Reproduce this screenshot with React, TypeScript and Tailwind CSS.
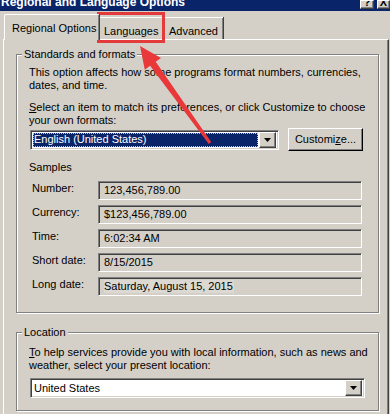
import React from "react";

const raised =
  "bg-[#d4d0c8] border-t border-l border-t-white border-l-white border-b border-r border-b-[#404040] border-r-[#404040] shadow-[inset_-1px_-1px_0_#808080]";
const sunken =
  "border-t border-l border-t-[#808080] border-l-[#808080] border-b border-r border-b-white border-r-white shadow-[inset_1px_1px_0_#404040,inset_-1px_-1px_0_#d4d0c8]";

function Cap({ children, w }: { children: React.ReactNode; w: string }) {
  return (
    <div className={`${raised} ${w} h-[9px] flex justify-center overflow-hidden`}>
      <span className="-mt-[5px] text-[11px] leading-[12px] font-bold text-black">{children}</span>
    </div>
  );
}

function DropArrow() {
  return (
    <div className={`${raised} w-[17px] h-[16px] flex items-center justify-center`}>
      <svg width="7" height="4" viewBox="0 0 7 4">
        <polygon points="0,0 7,0 3.5,4" fill="#000" />
      </svg>
    </div>
  );
}

function Row({ label, value, highlight }: { label: string; value: string; highlight?: boolean }) {
  return (
    <div className="flex items-start">
      <div className="w-[66px] ml-[3px] pt-[1px] whitespace-nowrap">{label}</div>
      <div className={`${sunken} w-[264px] h-[19px] flex items-center pl-[5px] bg-[#d4d0c8]`}>
        <span className={highlight ? "bg-[#dcd9d2] pr-[1px]" : ""}>{value}</span>
      </div>
    </div>
  );
}

export default function App() {
  return (
    <div className="relative w-[390px] h-[414px] overflow-hidden bg-[#d4d0c8] text-[11px] leading-[13px] text-black font-['Liberation_Sans',Arial,sans-serif]">
      {/* Title bar */}
      <div className="flex h-[11px] bg-[#0a246a] overflow-hidden">
        <div className="-mt-[4px] pl-[1px] text-[12px] leading-[12px] font-bold text-white whitespace-nowrap">
          Regional and Language Options
        </div>
        <div className="ml-auto flex gap-[3px] items-start">
          <Cap w="w-[14px]">?</Cap>
          <Cap w="w-[13px]">X</Cap>
        </div>
      </div>

      {/* Tabs */}
      <div className="flex items-end h-[28px] pl-[4px]">
        <div className="relative z-10 -mb-px h-[26px] w-[95px] pl-[7px] pt-[7px] bg-[#d4d0c8] border-l border-t border-white rounded-tl-[2px] shadow-[inset_-1px_0_0_#808080,1px_0_0_#404040] whitespace-nowrap">
          Regional Options
        </div>
        <div className="h-[22px] w-[64px] pl-[5px] pt-[7px] border-t border-white shadow-[inset_-1px_0_0_#808080,1px_0_0_#404040] whitespace-nowrap">
          Languages
        </div>
        <div className="h-[22px] w-[59px] ml-[1px] pl-[4px] pt-[7px] border-l border-t border-white shadow-[inset_-1px_0_0_#808080,1px_0_0_#404040] whitespace-nowrap">
          Advanced
        </div>
      </div>

      {/* Tab panel */}
      <div className="ml-[3px] w-[386px] h-[380px] border-l border-t border-white border-r border-r-[#404040] shadow-[inset_-1px_0_0_#808080] pl-[12px] pt-[8px]">
        <fieldset className="w-[363px] border border-[#808080] shadow-[inset_1px_1px_0_#fff,1px_1px_0_#fff] p-0 m-0">
          <legend className="ml-[5px] px-[2px] bg-[#d4d0c8] leading-[13px]">Standards and formats</legend>
          <div className="pl-[12px] pt-[5px] pb-[16px]">
            <div>This option affects how some programs format numbers, currencies,</div>
            <div>dates, and time.</div>
            <div className="mt-[9px]">
              <span className="underline">S</span>elect an item to match its preferences, or click Customize to choose
            </div>
            <div>your own formats:</div>
            <div className="mt-[1px] flex items-center h-[23px]">
              <div className={`${sunken} ml-[1px] w-[249px] h-[20px] bg-white flex items-center pl-[2px] pr-[2px]`}>
                <div className="flex-1 h-[14px] bg-[#0a246a] text-white flex items-center pl-[1px] outline-1 outline-dotted outline-[#c8c0a0] -outline-offset-1">
                  English (United States)
                </div>
                <div className="ml-[1px]">
                  <DropArrow />
                </div>
              </div>
              <div className={`${raised} ml-[9px] w-[75px] h-[23px] flex items-center justify-center border-b-black border-r-black`}>
                <span>
                  Customi<span className="underline">z</span>e...
                </span>
              </div>
            </div>
            <div className="mt-[10px]">Samples</div>
            <div className="mt-[7px] flex flex-col gap-[5px]">
              <Row label="Number:" value="123,456,789.00" />
              <Row label="Currency:" value="$123,456,789.00" />
              <Row label="Time:" value="6:02:34 AM" />
              <Row label="Short date:" value="8/15/2015" />
              <Row label="Long date:" value="Saturday, August 15, 2015" highlight />
            </div>
          </div>
        </fieldset>

        <fieldset className="mt-[13px] w-[363px] border border-[#808080] shadow-[inset_1px_1px_0_#fff,1px_1px_0_#fff] p-0 m-0">
          <legend className="ml-[5px] px-[2px] bg-[#d4d0c8] leading-[13px]">Location</legend>
          <div className="pl-[12px] pt-[7px] pb-[12px]">
            <div>
              <span className="underline">T</span>o help services provide you with local information, such as news and
            </div>
            <div>weather, select your present location:</div>
            <div className={`${sunken} mt-[6px] ml-[1px] w-[335px] h-[20px] bg-white flex items-center pl-[3px] pr-[2px]`}>
              <div className="flex-1">United States</div>
              <DropArrow />
            </div>
          </div>
        </fieldset>
      </div>

      {/* Annotation: red rectangle */}
      <div className="absolute left-[97px] top-[12px] w-[68px] h-[31px] border-[3px] border-[#e33b3b] pointer-events-none" />

      {/* Annotation: red arrow */}
      <svg className="absolute left-0 top-0 pointer-events-none" width="390" height="414" viewBox="0 0 390 414">
        <polygon
          points="140,46 161,58 155.7,61.8 211.2,142.1 208.8,143.9 150.1,65.8 144.8,69.7"
          fill="#e8383a"
        />
      </svg>
    </div>
  );
}
